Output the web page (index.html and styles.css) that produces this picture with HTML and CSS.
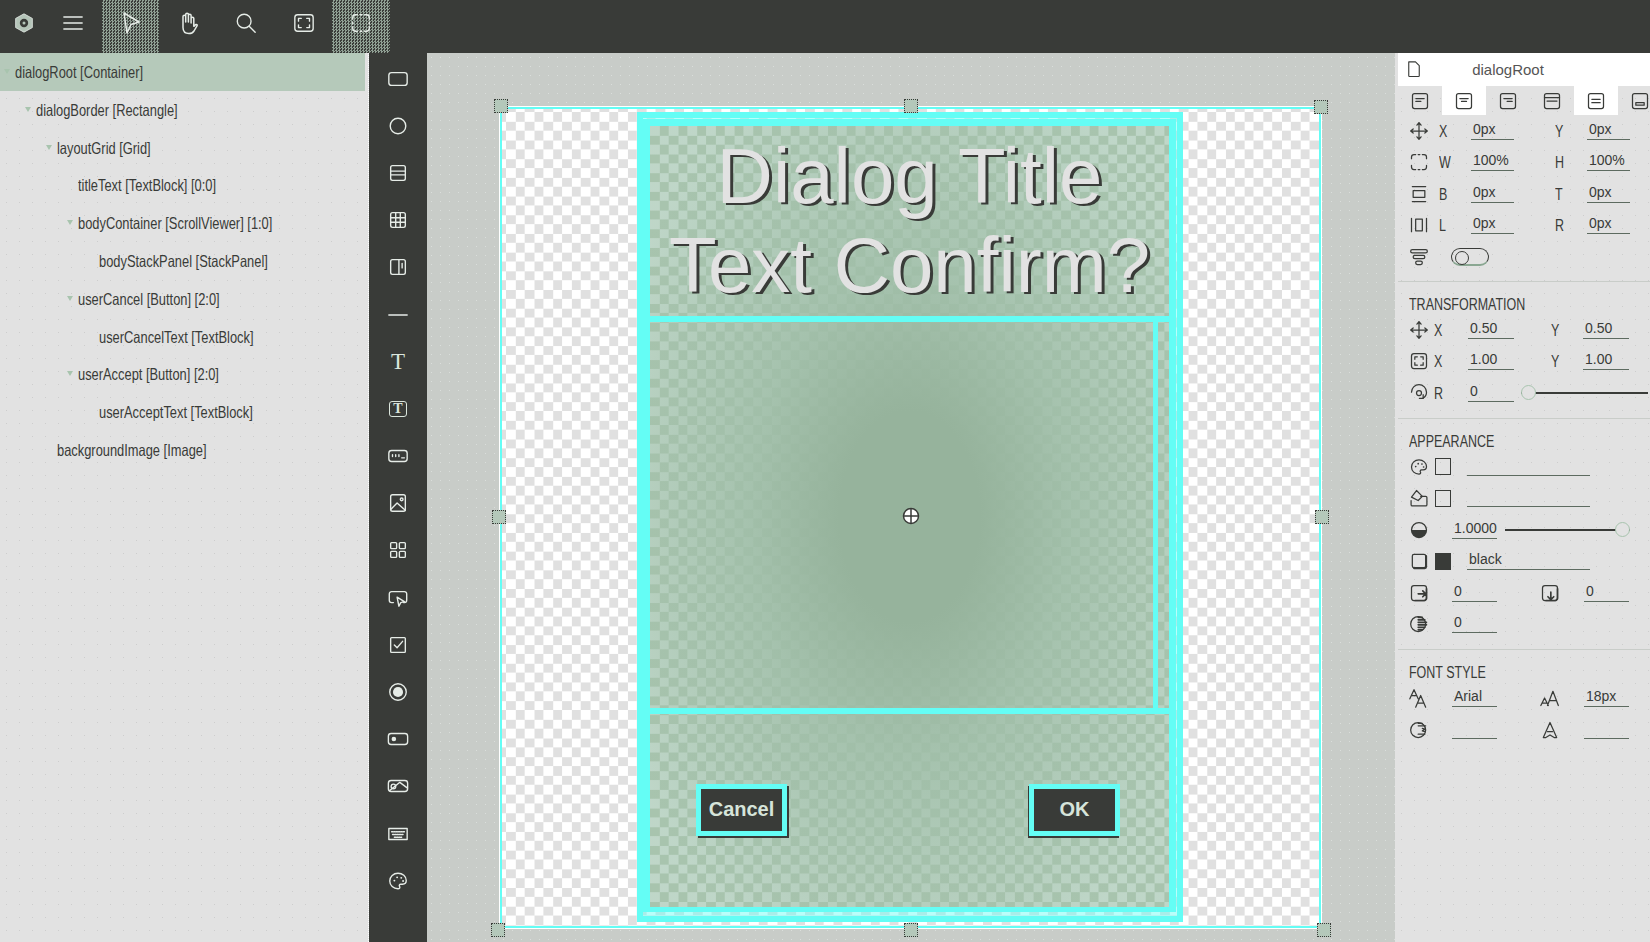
FILE: index.html
```html
<!DOCTYPE html>
<html lang="en">
<head>
  <meta charset="UTF-8" />
  <title>Dialog editor</title>
  <link rel="stylesheet" href="styles.css">
</head>
<body>
  <svg class="defs" width="0" height="0">
    <symbol id="i-rect" viewBox="0 0 24 24"><rect x="2" y="5" width="20" height="14" rx="3"/></symbol>
    <symbol id="i-circle" viewBox="0 0 24 24"><circle cx="12" cy="12" r="8.500"/></symbol>
    <symbol id="i-rows" viewBox="0 0 24 24"><rect x="4" y="4" width="16" height="16" rx="2"/><path d="M4 10h16M4 14h16"/></symbol>
    <symbol id="i-grid" viewBox="0 0 24 24"><rect x="4" y="4" width="16" height="16" rx="2"/><path d="M4 9.500h16M4 14.500h16M9.500 4v16M14.500 4v16"/></symbol>
    <symbol id="i-column" viewBox="0 0 24 24"><rect x="4" y="4" width="16" height="16" rx="2"/><path d="M13 4v16M16.500 8v5"/></symbol>
    <symbol id="i-line" viewBox="0 0 24 24"><path d="M2 12h20"/></symbol>
    <symbol id="i-input" viewBox="0 0 24 24"><rect x="2" y="6" width="20" height="12" rx="3"/><path d="M6 10.500v2M9.500 10.500v2M13 10.500v2M16 14h3"/></symbol>
    <symbol id="i-image" viewBox="0 0 24 24"><rect x="4" y="3" width="16" height="18" rx="2"/><path d="M4 19l7-7 9 8"/><circle cx="16" cy="8" r="1.500"/></symbol>
    <symbol id="i-squares" viewBox="0 0 24 24"><rect x="4" y="4" width="6.500" height="6.500" rx="1"/><rect x="13.500" y="4" width="6.500" height="6.500" rx="1"/><rect x="4" y="13.500" width="6.500" height="6.500" rx="1"/><rect x="13.500" y="13.500" width="6.500" height="6.500" rx="1"/></symbol>
    <symbol id="i-button" viewBox="0 0 24 24"><path d="M7 17H5a2.500 2.500 0 0 1-2.500-2.500v-7A2.500 2.500 0 0 1 5 5h14a2.500 2.500 0 0 1 2.500 2.500v7A2.500 2.500 0 0 1 19 17h-1"/><path d="M11 11l8 5-4 1-2 4z"/></symbol>
    <symbol id="i-check" viewBox="0 0 24 24"><rect x="4" y="4" width="16" height="16" rx="1"/><path d="M8 12l3 3 6-7"/></symbol>
    <symbol id="i-radio" viewBox="0 0 24 24"><circle cx="12" cy="12" r="9"/><circle cx="12" cy="12" r="5.500" class="solid"/></symbol>
    <symbol id="i-switch" viewBox="0 0 24 24"><rect x="1.500" y="6" width="21" height="12" rx="3"/><circle cx="7.500" cy="12" r="2.500" class="solid"/></symbol>
    <symbol id="i-imgslide" viewBox="0 0 24 24"><rect x="1.500" y="6" width="21" height="12" rx="3"/><circle cx="7" cy="12.500" r="2.500"/><path d="M3 17l11-9 8 6"/></symbol>
    <symbol id="i-keyboard" viewBox="0 0 24 24"><rect x="2" y="6" width="20" height="12"/><path d="M5 9.500h14M6 12.500h12M8 15.500h8" stroke-dasharray="1.500 1"/></symbol>
    <symbol id="i-palette" viewBox="0 0 24 24"><path d="M12 3.500c5 0 9 3.500 9 8 0 2.800-2 4-4 4h-2c-1.500 0-2 1.500-1.300 2.500.8 1.200 0 2.500-1.700 2.500-5 0-9-3.500-9-8.500s4-8.500 9-8.500z"/><path d="M8 11.500h.1M11 8h.1M15.500 8.500h.1M17.500 12h.1" stroke-width="2"/></symbol>
    <symbol id="i-menu" viewBox="0 0 24 24"><path d="M2 5.500h20M2 12h20M2 18.500h20"/></symbol>
    <symbol id="i-pointer" viewBox="0 0 24 24"><path d="M5 2l15 9-8 2.500L8 22z"/></symbol>
    <symbol id="i-hand" viewBox="0 0 24 24"><path d="M7 13V5.500a1.300 1.300 0 0 1 2.700 0V11M9.700 11V3.500a1.300 1.300 0 0 1 2.700 0V11M12.400 11V4.500a1.300 1.300 0 0 1 2.700 0V12M15.100 12V7.500a1.300 1.300 0 0 1 2.700 0v7.500c0 1 1-1 2.200-1.500 1-.3 1.500.5 1 1.300L18 20c-1 1.500-2.500 2.500-5 2.500-3.500 0-6-2-6-6V13"/></symbol>
    <symbol id="i-zoom" viewBox="0 0 24 24"><circle cx="10" cy="10" r="7.500"/><path d="M15.500 15.500l6.500 6.500"/></symbol>
    <symbol id="i-fit" viewBox="0 0 24 24"><rect x="2" y="3" width="20" height="18" rx="3"/><path d="M6 10V7h3M15 7h3v3M18 14v3h-3M9 17H6v-3"/></symbol>
    <symbol id="i-select" viewBox="0 0 24 24"><path d="M3 8V6a3 3 0 0 1 3-3h2M16 3h2a3 3 0 0 1 3 3v2M21 16v2a3 3 0 0 1-3 3h-2M8 21H6a3 3 0 0 1-3-3v-2M3 11v2M21 11v2M11 3h2M11 21h2"/></symbol>
    <symbol id="i-page" viewBox="0 0 24 24"><path d="M5 2.500h9l5 5V21a1 1 0 0 1-1 1H6a1 1 0 0 1-1-1z"/></symbol>
    <symbol id="i-a1" viewBox="0 0 24 24"><rect x="3" y="3" width="18" height="18" rx="2.500"/><path d="M7 9h10M7 12.500h6"/></symbol>
    <symbol id="i-a2" viewBox="0 0 24 24"><rect x="3" y="3" width="18" height="18" rx="2.500"/><path d="M7 9h10M9 12.500h6"/></symbol>
    <symbol id="i-a3" viewBox="0 0 24 24"><rect x="3" y="3" width="18" height="18" rx="2.500"/><path d="M7 9h10M11 12.500h6"/></symbol>
    <symbol id="i-a4" viewBox="0 0 24 24"><rect x="3" y="3" width="18" height="18" rx="2.500"/><path d="M3 8h18M6 12h12"/></symbol>
    <symbol id="i-a5" viewBox="0 0 24 24"><rect x="3" y="3" width="18" height="18" rx="2.500"/><path d="M7 10h10M7 14h10"/></symbol>
    <symbol id="i-a6" viewBox="0 0 24 24"><rect x="3" y="3" width="18" height="18" rx="2.500"/><rect x="7" y="14" width="10" height="3"/></symbol>
    <symbol id="i-move" viewBox="0 0 24 24"><path d="M12 2v20M2 12h20M9.500 5L12 2l2.500 3M9.500 19l2.500 3 2.500-3M5 9.500L2 12l3 2.500M19 9.500l3 2.500-3 2.500"/></symbol>
    <symbol id="i-size" viewBox="0 0 24 24"><path d="M3 8V6a3 3 0 0 1 3-3h2M16 3h2a3 3 0 0 1 3 3v2M21 16v2a3 3 0 0 1-3 3h-2M8 21H6a3 3 0 0 1-3-3v-2M11 3h2M11 21h2"/></symbol>
    <symbol id="i-vpad" viewBox="0 0 24 24"><path d="M4 3h16M4 21h16"/><rect x="5" y="8" width="14" height="8"/></symbol>
    <symbol id="i-hpad" viewBox="0 0 24 24"><path d="M3 4v16M21 4v16"/><rect x="8" y="5" width="8" height="14"/></symbol>
    <symbol id="i-stack" viewBox="0 0 24 24"><rect x="2" y="3" width="20" height="4" rx="2"/><rect x="5" y="10" width="14" height="4" rx="2"/><rect x="8" y="17" width="8" height="4" rx="2"/></symbol>
    <symbol id="i-scale" viewBox="0 0 24 24"><rect x="3" y="3" width="18" height="18" rx="3"/><path d="M7 10V7h3M14 7h3v3M17 14v3h-3M10 17H7v-3"/></symbol>
    <symbol id="i-rotate" viewBox="0 0 24 24"><path d="M3 11a9 9 0 0 1 18 0c0 3-1.500 5.500-4 7"/><circle cx="12" cy="12" r="3"/><path d="M17 14v4.500h-4.500"/></symbol>
    <symbol id="i-fill" viewBox="0 0 24 24"><path d="M14 10h6a1.500 1.500 0 0 1 1.500 1.500V20a1.500 1.500 0 0 1-1.500 1.500H4A1.500 1.500 0 0 1 2.500 20v-5"/><path d="M9 3l7 7-5 5-8-4z"/></symbol>
    <symbol id="i-half" viewBox="0 0 24 24"><circle cx="12" cy="12" r="9"/><path d="M3 12a9 9 0 0 0 18 0z" class="solid"/></symbol>
    <symbol id="i-square" viewBox="0 0 24 24"><rect x="4" y="4" width="16" height="16" rx="2"/><path d="M6 20.500h13a1.500 1.500 0 0 0 1.500-1.500V6" stroke-width="2.500"/></symbol>
    <symbol id="i-shadowx" viewBox="0 0 24 24"><rect x="3" y="3" width="18" height="18" rx="3"/><path d="M11 13h9M16.500 9.500L20 13l-3.500 3.500M21 7v12l-2 2H7" stroke-width="2"/></symbol>
    <symbol id="i-shadowy" viewBox="0 0 24 24"><rect x="3" y="3" width="18" height="18" rx="3"/><path d="M13 11v9M9.500 16.500L13 20l3.500-3.500M21 7v12l-2 2H7" stroke-width="2"/></symbol>
    <symbol id="i-blur" viewBox="0 0 24 24"><circle cx="11" cy="12" r="9"/><path d="M11 4h5M11 7h8M11 10h10M11 13h10M11 16h8M11 19h5" stroke-width="2"/></symbol>
    <symbol id="i-blur2" viewBox="0 0 24 24"><circle cx="11" cy="12" r="9"/><path d="M11 4h5M11 7h9M16 10l3 1-3 2 3 1M11 17h8" stroke-width="1.500"/></symbol>
    <symbol id="i-font" viewBox="0 0 24 24"><path d="M1 13L6 2l5 11M3 9h6M8 23l6-14 6 14M10 18h8"/></symbol>
    <symbol id="i-fontsize" viewBox="0 0 24 24"><path d="M1 21l4.500-9 4.500 9M3 18h5M9 21L15.500 4 22 21M12 15h7"/></symbol>
    <symbol id="i-fontcolor" viewBox="0 0 24 24"><path d="M4 21L12 3l8 18-3 0-5-3-5 3z"/><path d="M9 14h6"/></symbol>
  </svg>

  <div class="app">
    <header class="topbar">
      <div class="top-btn logo">
        <svg class="logo-mark" viewBox="0 0 24 24"><path d="M12 1l10 5.500v11L12 23 2 17.500v-11z"/><circle cx="12" cy="12" r="5"/><circle class="logo-dot" cx="12" cy="12" r="1.800"/></svg>
      </div>
      <div class="top-btn"><svg class="ico"><use href="#i-menu"/></svg></div>
      <div class="top-btn active"><svg class="ico big"><use href="#i-pointer"/></svg></div>
      <div class="top-btn"><svg class="ico big"><use href="#i-hand"/></svg></div>
      <div class="top-btn"><svg class="ico"><use href="#i-zoom"/></svg></div>
      <div class="top-btn"><svg class="ico"><use href="#i-fit"/></svg></div>
      <div class="top-btn active"><svg class="ico"><use href="#i-select"/></svg></div>
    </header>

    <main class="workspace">
      <aside class="tree">
        <div class="tree-row selected lv0 open"><span class="narrow">dialogRoot [Container]</span></div>
        <div class="tree-row lv1 open"><span class="narrow">dialogBorder [Rectangle]</span></div>
        <div class="tree-row lv2 open"><span class="narrow">layoutGrid [Grid]</span></div>
        <div class="tree-row lv3"><span class="narrow">titleText [TextBlock] [0:0]</span></div>
        <div class="tree-row lv3 open"><span class="narrow">bodyContainer [ScrollViewer] [1:0]</span></div>
        <div class="tree-row lv4"><span class="narrow">bodyStackPanel [StackPanel]</span></div>
        <div class="tree-row lv3 open"><span class="narrow">userCancel [Button] [2:0]</span></div>
        <div class="tree-row lv4"><span class="narrow">userCancelText [TextBlock]</span></div>
        <div class="tree-row lv3 open"><span class="narrow">userAccept [Button] [2:0]</span></div>
        <div class="tree-row lv4"><span class="narrow">userAcceptText [TextBlock]</span></div>
        <div class="tree-row lv2"><span class="narrow">backgroundImage [Image]</span></div>
      </aside>

      <nav class="tools">
        <svg class="ico"><use href="#i-rect"/></svg>
        <svg class="ico"><use href="#i-circle"/></svg>
        <svg class="ico"><use href="#i-rows"/></svg>
        <svg class="ico"><use href="#i-grid"/></svg>
        <svg class="ico"><use href="#i-column"/></svg>
        <svg class="ico"><use href="#i-line"/></svg>
        <span class="tool-t">T</span>
        <span class="tool-t boxed">T</span>
        <svg class="ico"><use href="#i-input"/></svg>
        <svg class="ico"><use href="#i-image"/></svg>
        <svg class="ico"><use href="#i-squares"/></svg>
        <svg class="ico"><use href="#i-button"/></svg>
        <svg class="ico"><use href="#i-check"/></svg>
        <svg class="ico"><use href="#i-radio"/></svg>
        <svg class="ico"><use href="#i-switch"/></svg>
        <svg class="ico"><use href="#i-imgslide"/></svg>
        <svg class="ico"><use href="#i-keyboard"/></svg>
        <svg class="ico"><use href="#i-palette"/></svg>
      </nav>

      <section class="canvas">
        <div class="artboard">
          <div class="dialog">
            <div class="layout-grid">
              <div class="title-cell">Dialog Title Text Confirm?</div>
              <div class="body-cell"><div class="body-scroll"></div></div>
              <div class="footer-cell">
                <button class="dlg-btn cancel">Cancel</button>
                <button class="dlg-btn ok">OK</button>
              </div>
            </div>
          </div>
          <span class="handle h-tl"></span>
          <span class="handle h-tc"></span>
          <span class="handle h-tr"></span>
          <span class="handle h-ml"></span>
          <span class="handle h-mr"></span>
          <span class="handle h-bl"></span>
          <span class="handle h-bc"></span>
          <span class="handle h-br"></span>
          <svg class="pivot" viewBox="0 0 18 18"><circle cx="9" cy="9" r="7.500"/><path d="M9 1.500v15M1.500 9h15"/></svg>
        </div>
      </section>

      <aside class="props">
        <div class="props-head">
          <svg class="ico dark page"><use href="#i-page"/></svg>
          <span class="props-name">dialogRoot</span>
        </div>
        <div class="align-tabs">
          <div class="tab"><svg class="ico dark"><use href="#i-a1"/></svg></div>
          <div class="tab on"><svg class="ico dark"><use href="#i-a2"/></svg></div>
          <div class="tab"><svg class="ico dark"><use href="#i-a3"/></svg></div>
          <div class="tab"><svg class="ico dark"><use href="#i-a4"/></svg></div>
          <div class="tab on"><svg class="ico dark"><use href="#i-a5"/></svg></div>
          <div class="tab"><svg class="ico dark"><use href="#i-a6"/></svg></div>
        </div>

        <div class="section first">
          <div class="row box"><svg class="ico dark"><use href="#i-move"/></svg><span class="lbl"><span class="narrow">X</span></span><span class="field">0px</span><span class="lbl far"><span class="narrow">Y</span></span><span class="field">0px</span></div>
          <div class="row box"><svg class="ico dark"><use href="#i-size"/></svg><span class="lbl"><span class="narrow">W</span></span><span class="field">100%</span><span class="lbl far"><span class="narrow">H</span></span><span class="field">100%</span></div>
          <div class="row box"><svg class="ico dark"><use href="#i-vpad"/></svg><span class="lbl"><span class="narrow">B</span></span><span class="field">0px</span><span class="lbl far"><span class="narrow">T</span></span><span class="field">0px</span></div>
          <div class="row box"><svg class="ico dark"><use href="#i-hpad"/></svg><span class="lbl"><span class="narrow">L</span></span><span class="field">0px</span><span class="lbl far"><span class="narrow">R</span></span><span class="field">0px</span></div>
          <div class="row box"><svg class="ico dark"><use href="#i-stack"/></svg><span class="toggle"></span></div>
        </div>

        <div class="section">
          <h4 class="section-title"><span class="narrow">TRANSFORMATION</span></h4>
          <div class="row trans"><svg class="ico dark"><use href="#i-move"/></svg><span class="lbl"><span class="narrow">X</span></span><span class="field">0.50</span><span class="lbl far"><span class="narrow">Y</span></span><span class="field">0.50</span></div>
          <div class="row trans"><svg class="ico dark"><use href="#i-scale"/></svg><span class="lbl"><span class="narrow">X</span></span><span class="field">1.00</span><span class="lbl far"><span class="narrow">Y</span></span><span class="field">1.00</span></div>
          <div class="row trans"><svg class="ico dark"><use href="#i-rotate"/></svg><span class="lbl"><span class="narrow">R</span></span><span class="field">0</span><span class="slider rotate-slider"><i class="thumb"></i></span></div>
        </div>

        <div class="section">
          <h4 class="section-title"><span class="narrow">APPEARANCE</span></h4>
          <div class="row wide"><svg class="ico dark"><use href="#i-palette"/></svg><span class="swatch"></span><span class="field"></span></div>
          <div class="row wide"><svg class="ico dark"><use href="#i-fill"/></svg><span class="swatch"></span><span class="field"></span></div>
          <div class="row opacity"><svg class="ico dark"><use href="#i-half"/></svg><span class="field">1.0000</span><span class="slider opacity-slider"><i class="thumb"></i></span></div>
          <div class="row wide"><svg class="ico dark"><use href="#i-square"/></svg><span class="swatch black"></span><span class="field">black</span></div>
          <div class="row pair"><svg class="ico dark"><use href="#i-shadowx"/></svg><span class="field">0</span><svg class="ico dark far-ico"><use href="#i-shadowy"/></svg><span class="field">0</span></div>
          <div class="row pair"><svg class="ico dark"><use href="#i-blur"/></svg><span class="field">0</span></div>
        </div>

        <div class="section">
          <h4 class="section-title"><span class="narrow">FONT STYLE</span></h4>
          <div class="row pair"><svg class="ico dark"><use href="#i-font"/></svg><span class="field">Arial</span><svg class="ico dark far-ico"><use href="#i-fontsize"/></svg><span class="field">18px</span></div>
          <div class="row pair"><svg class="ico dark"><use href="#i-blur2"/></svg><span class="field"></span><svg class="ico dark far-ico"><use href="#i-fontcolor"/></svg><span class="field"></span></div>
        </div>
      </aside>
    </main>
  </div>
</body>
</html>
```

FILE: styles.css
```css
* {
  box-sizing: border-box;
}
html, body {
  margin: 0;
  height: 100%;
  overflow: hidden;
}
body {
  font-family: "Liberation Sans", Arial, sans-serif;
  color: #393b38;
  background: #393b38;
}
.defs {
  position: absolute;
}
.app {
  width: 1650px;
  height: 942px;
  display: flex;
  flex-direction: column;
}
/* no condensed face is installed, squeeze the regular one */
.narrow {
  display: inline-block;
  transform: scaleX(.78);
  transform-origin: left center;
  white-space: nowrap;
}

/* icons */
.ico {
  width: 22px;
  height: 22px;
  color: #e6ece7;
  fill: none;
  stroke: currentColor;
  stroke-width: 1.5;
  stroke-linecap: round;
  stroke-linejoin: round;
}
.ico.big {
  width: 24px;
  height: 24px;
}
.ico.dark {
  color: #393b38;
}
.solid {
  fill: currentColor;
  stroke: none;
}

/* top bar */
.topbar {
  height: 53px;
  flex: none;
  display: flex;
  background: #393b38;
}
.top-btn {
  width: 57.7px;
  height: 53px;
  padding-bottom: 7px;
  display: flex;
  align-items: center;
  justify-content: center;
}
.top-btn.logo {
  width: 44px;
  padding-left: 3px;
}
.top-btn.active {
  background: conic-gradient(#8f9f93 25%, #393b38 0 50%, #8f9f93 0 75%, #393b38 0) 0 0 / 3px 3px;
}
.logo-mark {
  width: 20px;
  height: 20px;
}
.logo-mark path {
  fill: #b4c4b8;
  stroke: #e6ece7;
}
.logo-mark circle {
  fill: #393b38;
}
.logo-mark .logo-dot {
  fill: #b4c4b8;
}

.workspace {
  flex: 1;
  display: flex;
  min-height: 0;
}

/* element tree */
.tree {
  width: 369px;
  flex: none;
  padding-right: 3px;
  background: radial-gradient(#cdcdcd .7px, transparent 1px) 0 0 / 13px 13px, #e2e2e2;
  border-right: 1px dotted #fff;
}
.tree-row {
  position: relative;
  height: 37.8px;
  line-height: 39px;
  font-size: 16.5px;
  color: #393b38;
  white-space: nowrap;
}
.tree-row.selected {
  background: #b5c9ba;
}
.tree-row.open::before {
  content: "";
  position: absolute;
  top: 16px;
  margin-left: -11px;
  border: 3.5px solid transparent;
  border-top: 5px solid #a8c4ae;
  border-bottom: 0;
}
.lv0 { padding-left: 15px; }
.lv1 { padding-left: 36px; }
.lv2 { padding-left: 57px; }
.lv3 { padding-left: 78px; }
.lv4 { padding-left: 99px; }

/* shape tools */
.tools {
  width: 58px;
  flex: none;
  padding: 2px 0 0 0;
  background: #393b38;
  display: grid;
  grid-auto-rows: 47.2px;
  justify-items: center;
  align-items: center;
  align-content: start;
}
.tool-t {
  width: 22px;
  height: 22px;
  font-family: "Liberation Serif", serif;
  font-size: 23px;
  line-height: 22px;
  text-align: center;
  color: #dbe6dd;
}
.tool-t.boxed {
  width: 18px;
  height: 16px;
  font-size: 14px;
  font-weight: bold;
  line-height: 14px;
  border: 1.5px solid #dbe6dd;
  border-radius: 3px;
}

/* canvas */
.canvas {
  width: 968px;
  flex: none;
  padding: 54px 0 0 73px;
  background: radial-gradient(#dadedb .7px, transparent 1px) 0 0 / 9px 9px, #c8ccc8;
}
.artboard {
  position: relative;
  width: 821px;
  height: 821px;
  padding: 3px 0 0 135px;
  border: 2px solid #64fdf5;
  background: conic-gradient(#e0e0e0 25%, #fff 0 50%, #e0e0e0 0 75%, #fff 0) 4px 3px / 18.7px 18.7px;
  outline: 1px solid #fff;
}
.dialog {
  width: 546px;
  height: 810px;
  padding: 1px 1px 4px 0;
  border: 6px solid #64fdf5;
  background: rgba(100, 253, 245, .45);
}
.layout-grid {
  height: 100%;
  display: grid;
  grid-template-rows: 190px 392px 1fr;
  border: solid #64fdf5;
  border-width: 7px 7px 5px 7px;
  background:
    radial-gradient(ellipse 320px 480px at 50% 50%, #96b39c 0%, #96b39c 22%, rgba(160, 190, 168, .88) 50%, rgba(168, 196, 174, .35) 100%),
    conic-gradient(#a8c4ae 25%, #cbe0d6 0 50%, #a8c4ae 0 75%, #cbe0d6 0) 0 0 / 18.7px 18.7px;
}
.title-cell {
  padding-top: 6px;
  text-align: center;
  font-size: 78px;
  line-height: 89px;
  color: #e2e2e2;
  text-shadow: 3px 2px 0 #393b38;
}
.body-cell {
  padding-right: 11px;
  border-top: 6px solid #64fdf5;
}
.body-scroll {
  height: 100%;
  border-right: 5px solid #64fdf5;
}
.footer-cell {
  padding: 0 49px 2px 46px;
  border-top: 6px solid #64fdf5;
  display: flex;
  align-items: center;
  justify-content: space-between;
}
.dlg-btn {
  width: 91px;
  height: 52px;
  padding: 0;
  border: 5px solid #64fdf5;
  background: #393b38;
  color: #d6e4da;
  font-family: "Liberation Sans", sans-serif;
  font-size: 20px;
  font-weight: bold;
}
.dlg-btn.cancel {
  box-shadow: 2px 2px 0 #393b38;
}
.dlg-btn.ok {
  box-shadow: -1px 2px 0 #393b38;
}

/* selection handles and pivot, lie over the artboard */
.handle {
  position: absolute;
  width: 14px;
  height: 14px;
  background: #b4c8ba;
  border: 1px dotted #393b38;
}
.h-tl { left: -8px; top: -10px; }
.h-tc { left: 402px; top: -10px; }
.h-tr { left: 812px; top: -9px; }
.h-ml { left: -10px; top: 401px; }
.h-mr { left: 813px; top: 401px; }
.h-bl { left: -11px; top: 814px; }
.h-bc { left: 402px; top: 814px; }
.h-br { left: 815px; top: 814px; }
.pivot {
  position: absolute;
  left: 400px;
  top: 398px;
  width: 18px;
  height: 18px;
  fill: #fff;
  stroke: #393b38;
  stroke-width: 1.5;
}

/* properties */
.props {
  flex: 1;
  padding-left: 3px;
  background: radial-gradient(#cdcdcd .7px, transparent 1px) 0 0 / 13px 13px, #e2e2e2;
}
.props-head {
  height: 33px;
  background: #fff;
  position: relative;
  display: flex;
  align-items: center;
  justify-content: center;
  font-size: 15px;
  color: #555;
}
.props-head .page {
  position: absolute;
  left: 7px;
  top: 7px;
  width: 18px;
  height: 18px;
}
.props-name {
  margin-right: 44px;
}
.align-tabs {
  height: 29px;
  display: flex;
}
.tab {
  width: 44px;
  display: flex;
  align-items: center;
  justify-content: center;
}
.tab.on {
  background: #fff;
}
.tab .ico {
  width: 20px;
  height: 20px;
}
.section {
  padding-top: 13px;
  padding-bottom: 9px;
  border-bottom: 1px solid #c9cdc9;
}
.section.first {
  padding-top: 0;
  padding-bottom: 8px;
}
.section:last-child {
  border-bottom: 0;
}
.section-title {
  margin: 0;
  height: 19.5px;
  padding-left: 11px;
  font-size: 16px;
  line-height: 20px;
  font-weight: normal;
}
.row {
  height: 31.5px;
  padding-left: 11px;
  display: flex;
  align-items: center;
  font-size: 14px;
}
.row .ico {
  width: 20px;
  height: 20px;
  flex: none;
}
.lbl {
  font-size: 16px;
  padding-top: 2px;
}
.field {
  height: 20px;
  line-height: 19px;
  padding-left: 2px;
  border-bottom: 1.5px solid #5d6b60;
  align-self: center;
  margin-bottom: 2px;
}
.box > .ico {
  margin-right: 10px;
}
.box .lbl {
  width: 32px;
}
.box .lbl.far {
  width: 73px;
  padding-left: 41px;
}
.box .field {
  width: 43px;
}
.trans > .ico {
  margin-right: 5px;
}
.trans .lbl {
  width: 34px;
}
.trans .lbl.far {
  width: 69px;
  padding-left: 37px;
}
.trans .field {
  width: 46px;
}
.wide > .ico {
  margin-right: 6px;
}
.swatch {
  width: 16px;
  height: 17px;
  border: 1px solid #393b38;
  margin-right: 16px;
}
.swatch.black {
  background: #393b38;
}
.wide .field {
  width: 123px;
}
.pair > .ico {
  margin-right: 23px;
}
.pair .field {
  width: 45px;
}
.pair > .field + .far-ico {
  margin-left: 43px;
  margin-right: 24px;
}
.opacity > .ico {
  margin-right: 23px;
}
.opacity .field {
  width: 45px;
}
.toggle {
  width: 38px;
  height: 18px;
  margin-left: 12px;
  border: 1px solid #393b38;
  border-bottom: 2px solid #8aa792;
  border-radius: 9px;
  position: relative;
}
.toggle::before {
  content: "";
  position: absolute;
  left: 3px;
  top: 2px;
  width: 12px;
  height: 12px;
  border: 1px solid #393b38;
  border-radius: 50%;
}
.slider {
  height: 2px;
  background: #393b38;
  position: relative;
  display: block;
}
.thumb {
  position: absolute;
  width: 15px;
  height: 15px;
  top: -7px;
  border: 1.5px solid #a8c4ae;
  border-radius: 50%;
  background: #e2e2e2;
}
.rotate-slider {
  width: 127px;
  margin-left: 7px;
}
.rotate-slider .thumb {
  left: 0;
}
.opacity-slider {
  width: 125px;
  margin-left: 8px;
}
.opacity-slider .thumb {
  right: 0;
}
```
